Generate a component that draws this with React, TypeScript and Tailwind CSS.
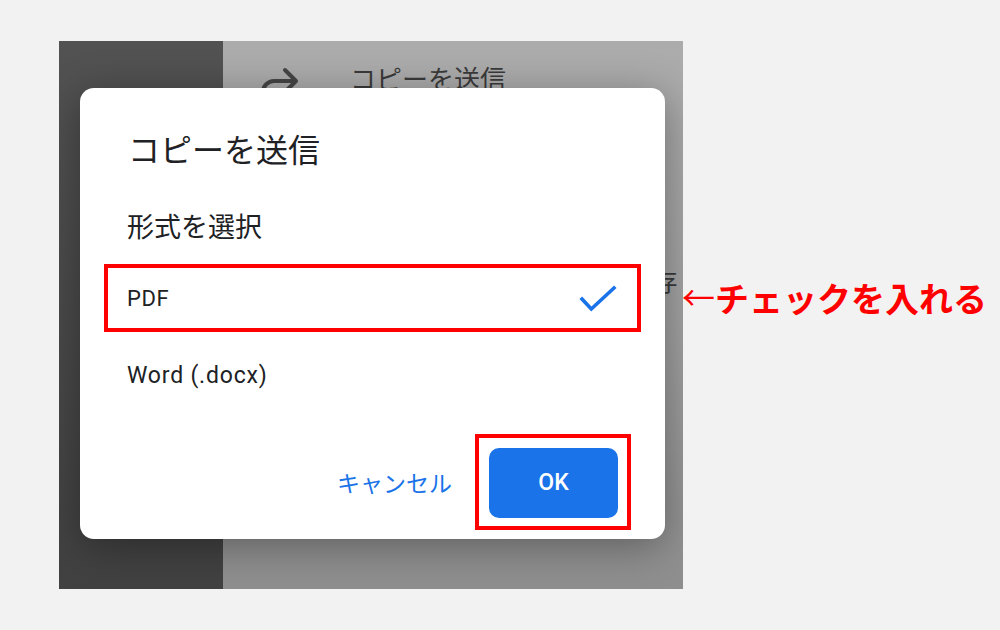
const jp = "font-['Noto_Sans_CJK_JP',sans-serif]";

const menuItems = [
  { label: 'コピーを送信', icon: true, size: 'text-[26px]' },
  { label: 'リンクをコピー', icon: false, size: 'text-[26px]' },
  { label: 'Word 形式で開く', icon: false, size: 'text-[26px]' },
  { label: 'ドキュメントのコピーを保存', icon: false, size: 'text-[25.2px]' },
];

const ForwardIcon = () => (
  <svg width="40" height="36" viewBox="0 0 40 36" fill="none" stroke="#454545" strokeWidth="4" strokeLinecap="round" strokeLinejoin="round">
    <path d="M4 36v-3a11 11 0 0 1 11-11h21" />
    <path d="M26 11l11 11-11 11" />
  </svg>
);

const CheckIcon = () => (
  <svg width="38" height="30" viewBox="0 0 38 30" fill="none" stroke="#1a73e8" strokeWidth="3.6" strokeLinecap="square">
    <path d="M3 16l9.3 10L35 5" />
  </svg>
);

const SendCopyDialog = () => (
  <div className="absolute left-[21px] top-[47px] w-[585px] h-[451px] rounded-[14px] bg-white shadow-[0_8px_40px_rgba(0,0,0,0.35)] flex flex-col">
    <h2 className={`pt-[40px] pl-[48px] text-[32px] leading-[40px] text-[#202124] ${jp}`}>コピーを送信</h2>
    <p className={`mt-[40px] pl-[47px] text-[27px] leading-[36px] text-[#202124] ${jp}`}>形式を選択</p>

    <div className="mx-[24px] mt-[20px] h-[68px] border-4 border-[#ff0000] flex items-center justify-between pl-[19px] pr-[20px]">
      <span className="font-[Roboto,sans-serif] text-[22px] tracking-[0.6px] text-[#202124]">PDF</span>
      <CheckIcon />
    </div>
    <div className="mx-[24px] mt-[12px] h-[64px] flex items-center pl-[23px]">
      <span className="font-[Roboto,sans-serif] text-[23px] tracking-[0.8px] text-[#202124]">Word (.docx)</span>
    </div>

    <div className="mt-[26px] pr-[34px] flex items-center justify-end gap-[23px]">
      <span className={`text-[23px] text-[#1a73e8] ${jp}`}>キャンセル</span>
      <div className="border-4 border-[#ff0000] pl-[10px] pt-[10px] pr-[9px] pb-[8px]">
        <button className="w-[129px] h-[70px] rounded-[10px] bg-[#1a73e8] text-white text-[23px] font-medium font-[Roboto,sans-serif] flex items-center justify-center">
          OK
        </button>
      </div>
    </div>
  </div>
);

export default function App() {
  return (
    <div className="w-[1000px] h-[630px] bg-[#f2f2f2] flex items-start pl-[59px] pt-[41px] overflow-hidden">
      <div className="relative w-[624px] h-[548px] flex overflow-hidden shrink-0">
        <div className="w-[164px] shrink-0 bg-gradient-to-b from-[#525252] to-[#414141]" />
        <div className="flex-1 min-w-0 bg-gradient-to-b from-[#acacac] via-[#a2a2a2] to-[#8e8e8e] pt-[2px]">
          {menuItems.map(item => (
            <div key={item.label} className="h-[68px] flex items-center">
              <div className="w-[127px] shrink-0 pl-[36px] flex items-center">{item.icon && <ForwardIcon />}</div>
              <span className={`${item.size} whitespace-nowrap text-[#3a3a3a] ${jp}`}>{item.label}</span>
            </div>
          ))}
        </div>
        <SendCopyDialog />
      </div>

      <div className={`mt-[236px] -ml-[1px] h-[40px] flex items-center whitespace-nowrap text-[#ff0000] text-[34px] ${jp}`}>
        <span className="font-normal text-[33px]">←</span>
        <span className="font-bold">チェックを入れる</span>
      </div>
    </div>
  );
}
